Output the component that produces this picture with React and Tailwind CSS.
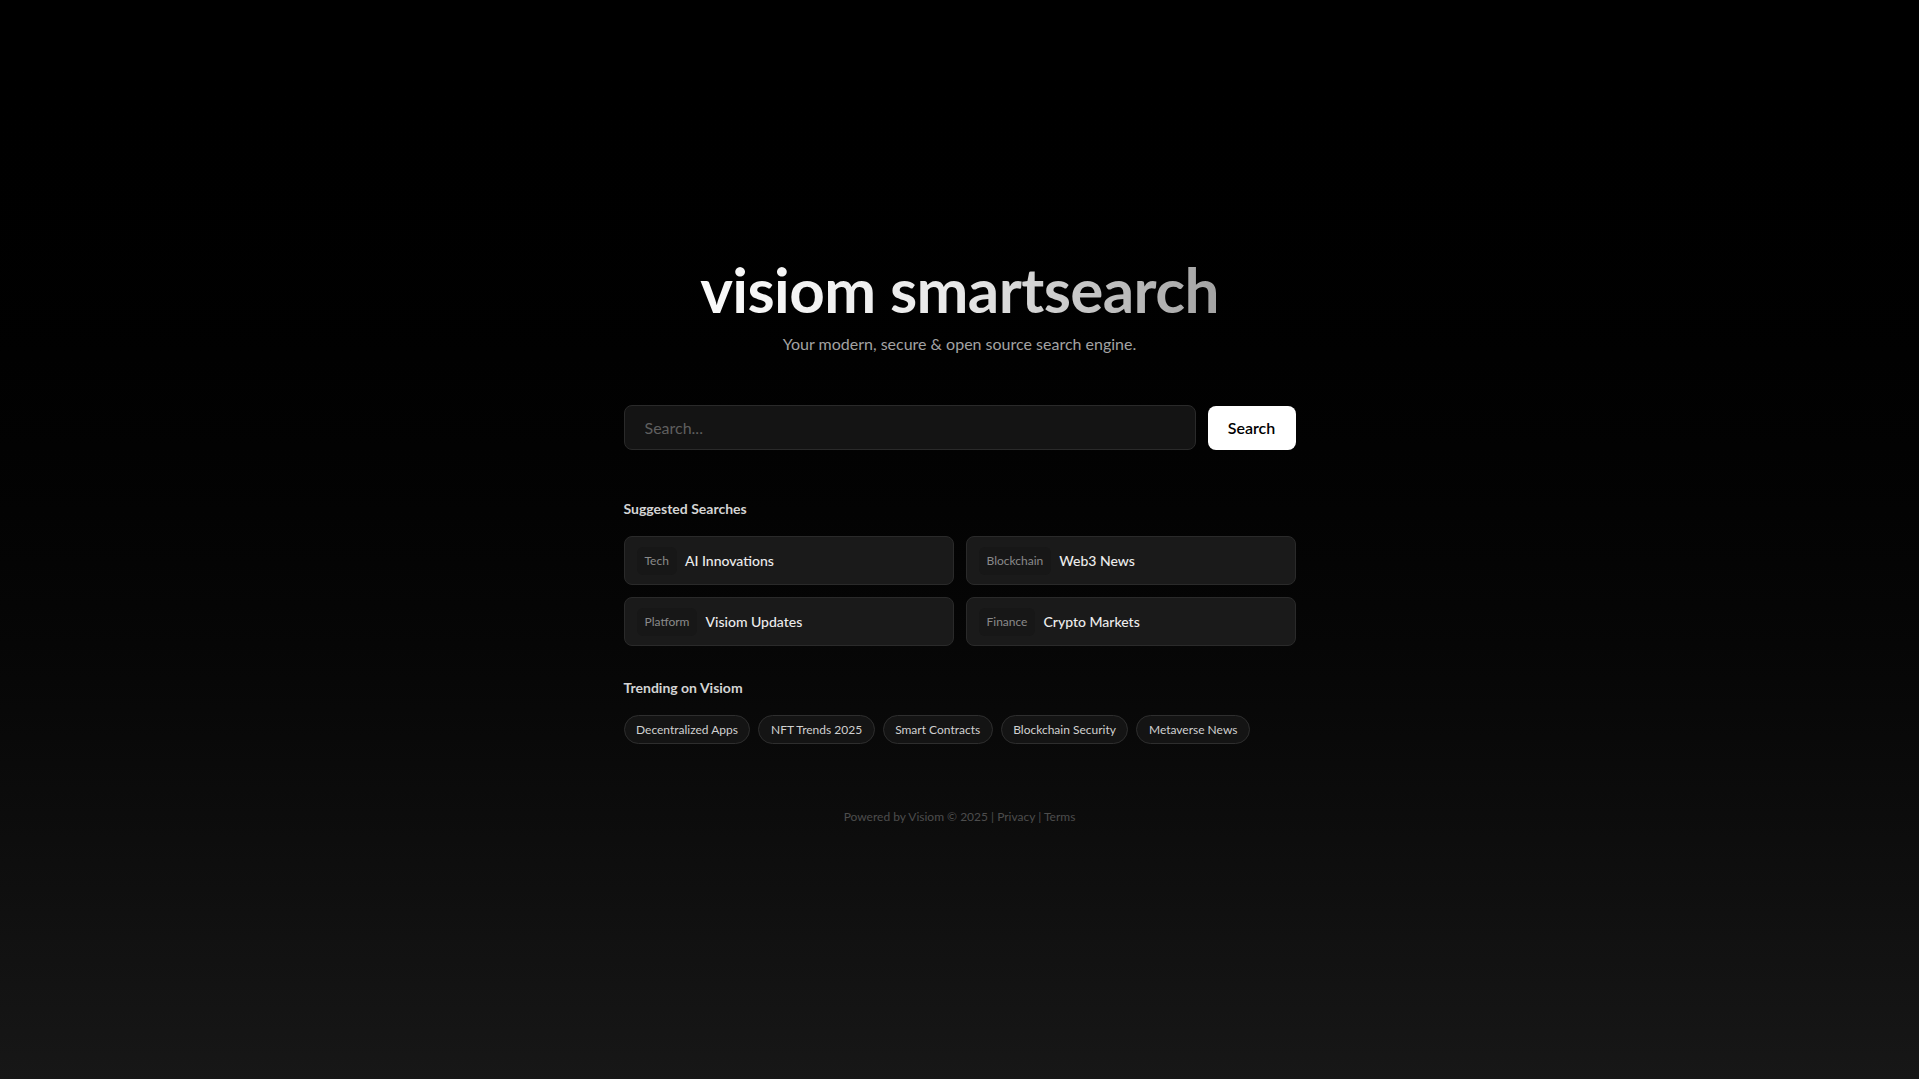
import React from "react";

const suggestions = [
  { tag: "Tech", title: "AI Innovations" },
  { tag: "Blockchain", title: "Web3 News" },
  { tag: "Platform", title: "Visiom Updates" },
  { tag: "Finance", title: "Crypto Markets" },
];

const trending = [
  "Decentralized Apps",
  "NFT Trends 2025",
  "Smart Contracts",
  "Blockchain Security",
  "Metaverse News",
];

export default function App() {
  return (
    <div
      className="min-h-screen bg-linear-to-b from-black to-[#171717] flex items-center justify-center pt-[9px]"
      style={{ fontFamily: '"Lato", "Noto Sans", "Liberation Sans", sans-serif' }}
    >
      <div className="w-[672px] flex flex-col">
        <h1 className="text-center text-[62px] leading-[52px] font-bold tracking-[-0.01em] bg-linear-to-r from-white via-[#e8e8e8] to-[#8f8f8f] bg-clip-text text-transparent">
          visiom smartsearch
        </h1>
        <p className="mt-[17px] text-center text-base leading-6 text-[#a3a3a3]">
          Your modern, secure &amp; open source search engine.
        </p>

        <form className="mt-[49px] flex gap-3" onSubmit={(e) => e.preventDefault()}>
          <input
            type="text"
            placeholder="Search..."
            className="flex-1 h-[45px] rounded-lg border border-[#2a2a2a] bg-[#141414] px-5 text-base text-white placeholder:text-[#5f5f5f] outline-none"
          />
          <button
            type="submit"
            className="w-[88px] h-[44px] mt-px rounded-lg bg-white text-base font-semibold text-black"
          >
            Search
          </button>
        </form>

        <h2 className="mt-[49px] text-sm leading-5 font-bold text-[#d4d4d4]">
          Suggested Searches
        </h2>
        <div className="mt-[17px] grid grid-cols-2 gap-3">
          {suggestions.map((s) => (
            <button
              key={s.title}
              className="flex items-center gap-2 h-[49px] rounded-lg border border-[#2a2a2a] bg-[#1a1a1a] px-3 text-left"
            >
              <span className="rounded-md bg-[#171717] px-2 py-1.5 text-xs leading-4 text-[#8a8a8a]">
                {s.tag}
              </span>
              <span className="text-sm font-medium text-[#ececec]">{s.title}</span>
            </button>
          ))}
        </div>

        <h2 className="mt-8 text-sm leading-5 font-bold text-[#d4d4d4]">
          Trending on Visiom
        </h2>
        <div className="mt-[17px] flex gap-2">
          {trending.map((t) => (
            <button
              key={t}
              className="h-[29px] rounded-full border border-[#2e2e2e] bg-[#141414] px-[11.5px] text-xs text-[#d0d0d0]"
            >
              {t}
            </button>
          ))}
        </div>

        <footer className="mt-[65px] text-center text-xs leading-4 text-[#4d4d4d]">
          Powered by Visiom © 2025 | <a href="#" className="hover:text-[#888]">Privacy</a> |{" "}
          <a href="#" className="hover:text-[#888]">Terms</a>
        </footer>
      </div>
    </div>
  );
}
